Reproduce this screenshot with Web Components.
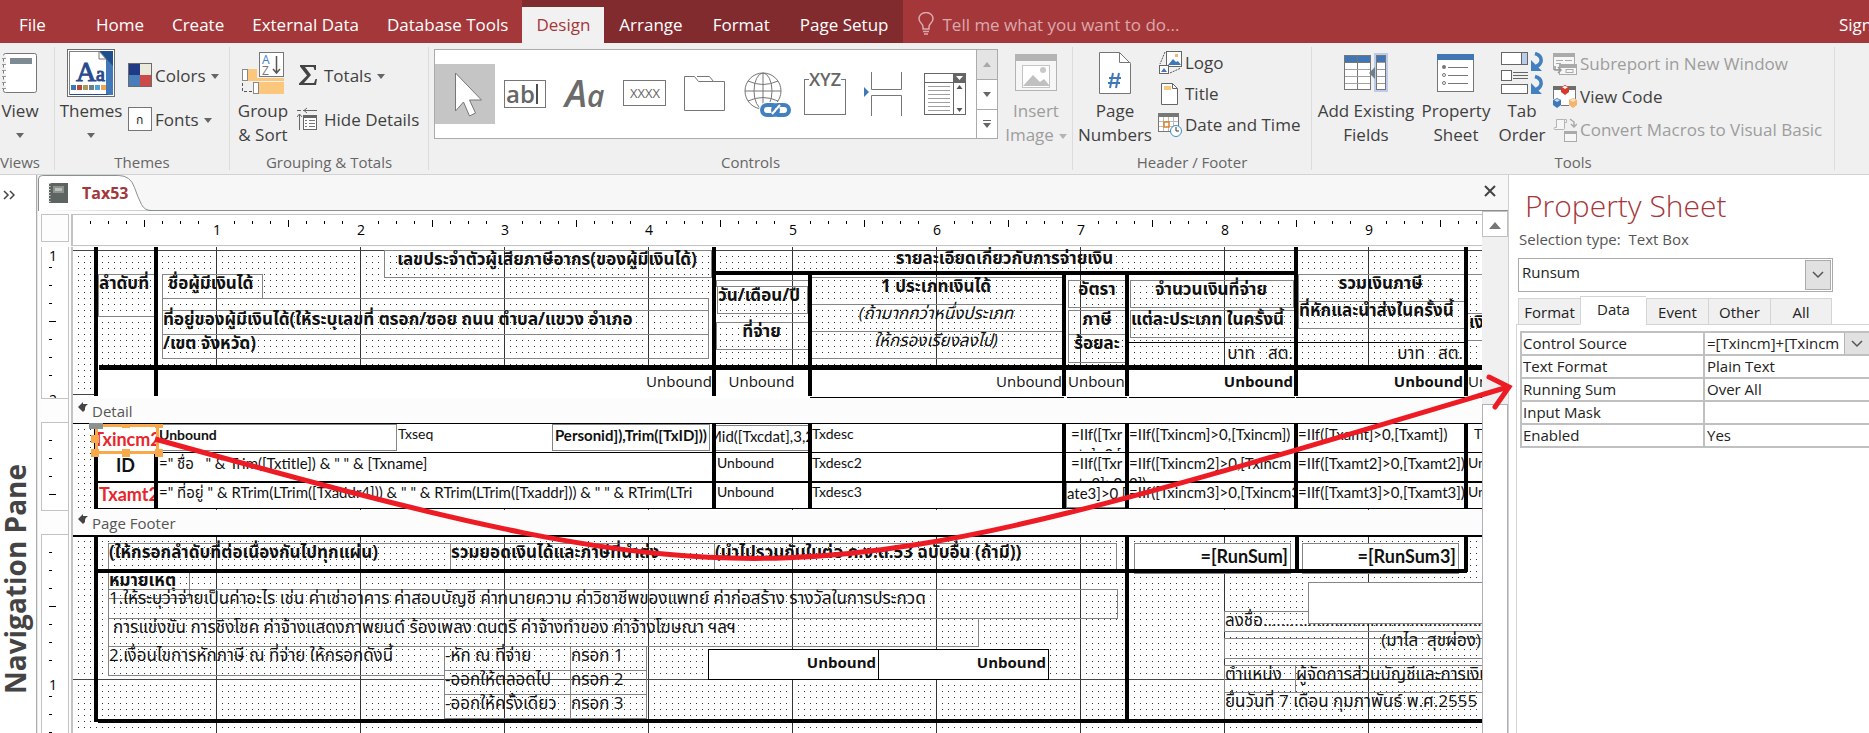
<!DOCTYPE html>
<html lang="en">
<head>
<meta charset="utf-8">
<title>Tax53 - Access</title>
<style>
  html, body { height: 100%; margin: 0; }
  body {
    overflow: hidden;
    background: #fff;
    font-family: "Open Sans", "Noto Sans Thai", "Noto Sans", sans-serif;
    font-size: 17px;
    color: #3f3f3f;
  }
</style>
</head>
<body>
<access-app>
  <tab-strip slot="tabs"></tab-strip>

  <ribbon-bar slot="ribbon">
    <ribbon-group label="Views" style="width:55px; --shift:-14px">
      <ribbon-button big icon="view" caret="below" style="width:68px">View</ribbon-button>
    </ribbon-group>
    <ribbon-group label="Themes" style="width:175px">
      <ribbon-button big icon="themes" caret="below" style="width:72px">Themes</ribbon-button>
      <ribbon-stack style="--row:44px; --top:6px">
        <ribbon-button icon="colors" caret="after">Colors</ribbon-button>
        <ribbon-button icon="fonts" caret="after">Fonts</ribbon-button>
      </ribbon-stack>
    </ribbon-group>
    <ribbon-group label="Grouping &amp; Totals" style="width:199px">
      <ribbon-button big icon="groupsort" style="width:66px">Group<br>&amp; Sort</ribbon-button>
      <ribbon-stack style="--row:44px; --top:6px">
        <ribbon-button icon="sigma" caret="after">Totals</ribbon-button>
        <ribbon-button icon="details">Hide Details</ribbon-button>
      </ribbon-stack>
    </ribbon-group>
    <ribbon-group label="Controls" style="width:644px">
      <control-gallery></control-gallery>
      <ribbon-button big disabled icon="image" caret="after" style="width:74px">Insert<br>Image</ribbon-button>
    </ribbon-group>
    <ribbon-group label="Header / Footer" style="width:239px">
      <ribbon-button big icon="pagenum" style="width:84px">Page<br>Numbers</ribbon-button>
      <ribbon-stack style="--row:31px">
        <ribbon-button icon="logo">Logo</ribbon-button>
        <ribbon-button icon="title">Title</ribbon-button>
        <ribbon-button icon="datetime">Date and Time</ribbon-button>
      </ribbon-stack>
    </ribbon-group>
    <ribbon-group label="Tools" style="width:523px">
      <ribbon-button big icon="fields" style="width:108px">Add Existing<br>Fields</ribbon-button>
      <ribbon-button big icon="propsheet" style="width:72px">Property<br>Sheet</ribbon-button>
      <ribbon-button big icon="taborder" style="width:60px">Tab<br>Order</ribbon-button>
      <ribbon-stack style="--row:33px">
        <ribbon-button disabled icon="subreport">Subreport in New Window</ribbon-button>
        <ribbon-button icon="code">View Code</ribbon-button>
        <ribbon-button disabled icon="macros">Convert Macros to Visual Basic</ribbon-button>
      </ribbon-stack>
    </ribbon-group>
  </ribbon-bar>

  <nav-pane>Navigation Pane</nav-pane>

  <report-document name="Tax53">
    <report-section height="151" origin="3" first="1">
      <report-line x="0" y="3" width="1410" height="1" thin></report-line>
      <report-line x="0" y="147" width="22" height="1" thin></report-line>
      <report-item x="25" y="27" width="57" height="43" class="box bold">ลำดับที่</report-item>
      <report-item x="89" y="27" width="101" height="25" class="box bold" style="--pad:5px">ชื่อผู้มีเงินได้</report-item>
      <report-item x="89" y="51" width="547" height="13" class="box"></report-item>
      <report-item x="89" y="63" width="547" height="25" class="box bold">ที่อยู่ของผู้มีเงินได้(ให้ระบุเลขที่ ตรอก/ซอย ถนน ตำบล/แขวง อำเภอ</report-item>
      <report-item x="89" y="87" width="547" height="25" class="box bold">/เขต จังหวัด)</report-item>
      <report-item x="311" y="3" width="328" height="28" class="box bold center">เลขประจำตัวผู้เสียภาษีอากร(ของผู้มีเงินได้)</report-item>
      <report-item x="643" y="3" width="578" height="22" class="bold center">รายละเอียดเกี่ยวกับการจ่ายเงิน</report-item>
      <report-item x="643" y="33" width="93" height="7" class="box"></report-item>
      <report-item x="644" y="39" width="91" height="28" class="box bold">วัน/เดือน/ปี</report-item>
      <report-item x="643" y="75" width="93" height="28" class="box bold center">ที่จ่าย</report-item>
      <report-item x="737" y="30" width="254" height="28" class="box bold center">1 ประเภทเงินได้</report-item>
      <report-item x="737" y="57" width="254" height="28" class="box italic center">(ถ้ามากกว่าหนึ่งประเภท</report-item>
      <report-item x="737" y="84" width="254" height="28" class="box italic center">ให้กรองเรียงลงไป)</report-item>
      <report-item x="995" y="33" width="60" height="28" class="box bold center">อัตรา</report-item>
      <report-item x="995" y="63" width="60" height="25" class="box bold center">ภาษี</report-item>
      <report-item x="995" y="87" width="60" height="29" class="box bold center">ร้อยละ</report-item>
      <report-item x="1057" y="33" width="164" height="28" class="box bold center">จำนวนเงินที่จ่าย</report-item>
      <report-item x="1057" y="63" width="165" height="28" class="box bold">แต่ละประเภท ในครั้งนี้</report-item>
      <report-line x="1056" y="95" width="335" height="1"></report-line>
      <report-item x="1056" y="98" width="166" height="20" class="end">บาท&nbsp;&nbsp; สต.</report-item>
      <report-item x="1225" y="27" width="167" height="28" class="box bold center">รวมเงินภาษี</report-item>
      <report-item x="1225" y="54" width="167" height="28" class="box bold">ที่หักและนำส่งในครั้งนี้</report-item>
      <report-item x="1225" y="98" width="167" height="20" class="end">บาท&nbsp;&nbsp; สต.</report-item>
      <report-item x="1394" y="27" width="60" height="40" class="box"></report-item>
      <report-item x="1394" y="66" width="60" height="28" class="box bold" style="--pad:1px">เงิ</report-item>
      <report-item x="25" y="122" width="616" height="29" class="fill end text">Unbound</report-item>
      <report-item x="643" y="122" width="92" height="29" class="fill center text">Unbound</report-item>
      <report-item x="737" y="122" width="254" height="29" class="fill end text foot">Unbound</report-item>
      <report-item x="994" y="122" width="60" height="29" class="fill text foot">Unbound</report-item>
      <report-item x="1056" y="122" width="166" height="29" class="fill end text foot bold">Unbound</report-item>
      <report-item x="1223" y="122" width="169" height="29" class="fill end text foot bold">Unbound</report-item>
      <report-item x="1394" y="122" width="80" height="29" class="fill text foot">Unbound</report-item>
      <report-line x="26" y="118" width="1400" height="5"></report-line>
      <report-line x="643" y="24" width="582" height="4"></report-line>
      <report-line x="21" y="0" width="4" height="149"></report-line>
      <report-line x="81" y="0" width="4" height="149"></report-line>
      <report-line x="639" y="0" width="4" height="149"></report-line>
      <report-line x="735" y="28" width="4" height="121"></report-line>
      <report-line x="989" y="28" width="4" height="121"></report-line>
      <report-line x="1052" y="28" width="4" height="121"></report-line>
      <report-line x="1221" y="0" width="4" height="149"></report-line>
      <report-line x="1391" y="0" width="4" height="149"></report-line>
    </report-section>

    <section-bar>Detail</section-bar>

    <report-section height="87" origin="0">
      <report-item x="22" y="1" width="1460" height="85" class="fill"></report-item>
      <report-item x="85" y="1" width="239" height="27" class="box code bold">Unbound</report-item>
      <report-item x="324" y="1" width="155" height="27" class="code">Txseq</report-item>
      <report-item x="479" y="1" width="158" height="27" class="box expr bold end">Personid]),Trim([TxID]))</report-item>
      <report-item x="642" y="2" width="94" height="26" class="box expr center">Mid([Txcdat],3,2</report-item>
      <report-item x="738" y="1" width="250" height="27" class="code">Txdesc</report-item>
      <report-item x="997" y="1" width="54" height="27" class="expr">=IIf([Txr<br>ate]&gt;0,[</report-item>
      <report-item x="1055" y="1" width="166" height="27" class="expr">=IIf([Txincm]&gt;0,[Txincm])</report-item>
      <report-item x="1224" y="1" width="166" height="27" class="expr">=IIf([Txamt]&gt;0,[Txamt])</report-item>
      <report-item x="1400" y="1" width="66" height="27" class="code">T</report-item>

      <report-item x="25" y="30" width="56" height="28" class="name center">ID</report-item>
      <report-item x="85" y="30" width="554" height="28" class="expr">=" ชื่อ&nbsp;&nbsp; " &amp; Trim([Txtitle]) &amp; " " &amp; [Txname]</report-item>
      <report-item x="643" y="30" width="92" height="28" class="code">Unbound</report-item>
      <report-item x="738" y="30" width="250" height="28" class="code">Txdesc2</report-item>
      <report-item x="997" y="30" width="54" height="28" class="expr">=IIf([Txr<br>ate2]&gt;0,</report-item>
      <report-item x="1055" y="30" width="166" height="28" class="expr">=IIf([Txincm2]&gt;0,[Txincm<br>2])</report-item>
      <report-item x="1224" y="30" width="168" height="28" class="expr">=IIf([Txamt2]&gt;0,[Txamt2])</report-item>
      <report-item x="1394" y="30" width="66" height="28" class="code">Unbound</report-item>

      <report-item x="25" y="59" width="56" height="26" class="name red">Txamt2</report-item>
      <report-item x="85" y="59" width="554" height="26" class="expr">=" ที่อยู่ " &amp; RTrim(LTrim([Txaddr4])) &amp; " " &amp; RTrim(LTrim([Txaddr])) &amp; " " &amp; RTrim(LTri</report-item>
      <report-item x="643" y="59" width="92" height="26" class="code">Unbound</report-item>
      <report-item x="738" y="59" width="250" height="26" class="code">Txdesc3</report-item>
      <report-item x="993" y="59" width="60" height="26" class="box expr">ate3]&gt;0,[T</report-item>
      <report-item x="1055" y="59" width="166" height="26" class="expr">=IIf([Txincm3]&gt;0,[Txincm3</report-item>
      <report-item x="1224" y="59" width="168" height="26" class="expr">=IIf([Txamt3]&gt;0,[Txamt3])</report-item>
      <report-item x="1394" y="59" width="66" height="26" class="code">Unbound</report-item>

      <report-line x="0" y="0" width="1426" height="1"></report-line>
      <report-line x="85" y="29" width="1341" height="1"></report-line>
      <report-line x="22" y="58" width="1404" height="2"></report-line>
      <report-line x="22" y="85" width="1404" height="1"></report-line>
      <report-line x="21" y="1" width="4" height="85"></report-line>
      <report-line x="81" y="1" width="4" height="85"></report-line>
      <report-line x="639" y="1" width="4" height="85"></report-line>
      <report-line x="735" y="1" width="4" height="85"></report-line>
      <report-line x="989" y="1" width="4" height="85"></report-line>
      <report-line x="1052" y="1" width="4" height="85"></report-line>
      <report-line x="1221" y="1" width="4" height="85"></report-line>
      <report-line x="1391" y="1" width="4" height="85"></report-line>
      <selected-item x="22" y="1" width="64" height="30">Txincm2</selected-item>
    </report-section>

    <section-bar>Page Footer</section-bar>

    <report-section grow origin="0">
      <report-line x="0" y="144" width="1410" height="1" thin></report-line>
      <report-item x="35" y="8" width="343" height="30" class="box bold">(ให้กรอกลำดับที่ต่อเนื่องกันไปทุกแผ่น)</report-item>
      <report-item x="377" y="8" width="265" height="30" class="box bold">รวมยอดเงินได้และภาษีที่นำส่ง</report-item>
      <report-item x="641" y="8" width="403" height="30" class="box bold">(นำไปรวมกับใบต่อ ภ.ง.ด.53 ฉบับอื่น (ถ้ามี))</report-item>
      <report-item x="1061" y="8" width="157" height="31" class="box fill name end">=[RunSum]</report-item>
      <report-item x="1229" y="8" width="157" height="31" class="box fill name end">=[RunSum3]</report-item>
      <report-item x="35" y="36" width="82" height="28" class="box bold">หมายเหตุ</report-item>
      <report-item x="35" y="54" width="1010" height="30" class="box">1.ให้ระบุว่าจ่ายเป็นค่าอะไร เช่น ค่าเช่าอาคาร ค่าสอบบัญชี ค่าทนายความ ค่าวิชาชีพของแพทย์ ค่าก่อสร้าง รางวัลในการประกวด</report-item>
      <report-item x="35" y="83" width="871" height="29" class="box" style="--pad:4px">การแข่งขัน การชิงโชค ค่าจ้างแสดงภาพยนต์ ร้องเพลง ดนตรี ค่าจ้างทำของ ค่าจ้างโฆษณา ฯลฯ</report-item>
      <report-item x="35" y="111" width="337" height="30" class="box">2.เงื่อนไขการหักภาษี ณ ที่จ่าย ให้กรอกดังนี้</report-item>
      <report-item x="371" y="111" width="127" height="25" class="box">-หัก ณ ที่จ่าย</report-item>
      <report-item x="497" y="111" width="77" height="25" class="box">กรอก 1</report-item>
      <report-item x="371" y="135" width="127" height="25" class="box">-ออกให้ตลอดไป</report-item>
      <report-item x="497" y="135" width="77" height="25" class="box">กรอก 2</report-item>
      <report-item x="371" y="159" width="127" height="25" class="box">-ออกให้ครั้งเดียว</report-item>
      <report-item x="497" y="159" width="77" height="25" class="box">กรอก 3</report-item>
      <report-item x="635" y="114" width="171" height="31" class="box black fill bold end text">Unbound</report-item>
      <report-item x="805" y="114" width="171" height="31" class="box black fill bold end text">Unbound</report-item>
      <report-item x="1151" y="76" width="360" height="21" class="box">ลงชื่อ.............................................................................................</report-item>
      <report-item x="1235" y="47" width="260" height="42" class="box fill"></report-item>
      <report-item x="1151" y="103" width="360" height="21" class="box"></report-item>
      <report-item x="1151" y="97" width="259" height="22" class="end">(มาไล&nbsp; สุขผ่อง)</report-item>
      <report-item x="1151" y="130" width="72" height="28" class="box">ตำแหน่ง</report-item>
      <report-item x="1222" y="130" width="300" height="28" class="box">ผู้จัดการส่วนบัญชีและการเงิน</report-item>
      <report-item x="1151" y="157" width="360" height="28" class="box">ยื่นวันที่ 7 เดือน กุมภาพันธ์ พ.ศ.2555</report-item>
      <report-line x="0" y="0" width="1426" height="2"></report-line>
      <report-line x="21" y="34" width="1373" height="4"></report-line>
      <report-line x="25" y="184" width="1400" height="4"></report-line>
      <report-line x="21" y="1" width="4" height="186"></report-line>
      <report-line x="1052" y="1" width="4" height="184"></report-line>
      <report-line x="1222" y="1" width="4" height="34"></report-line>
      <report-line x="1391" y="1" width="4" height="36"></report-line>
    </report-section>
  </report-document>

  <property-sheet></property-sheet>
  <pen-mark slot="overlay"></pen-mark>
</access-app>

<script>
const define = (name, html, setup) => {
  const template = document.createElement('template')
  template.innerHTML = html

  customElements.define(name, class extends HTMLElement {
    constructor() {
      super()
      this.attachShadow({ mode: 'open' }).appendChild(template.content.cloneNode(true))
    }

    connectedCallback() {
      if (setup) setup(this, this.shadowRoot)
    }
  })
}

/* icons */

const cube = (x, y, a, b) => `<path d="M${x} ${y + 2}l4-2 4 2v5l-4 3-4-3z" fill="${a}"/><path d="M${x + 1} ${y + 2}l3-1 3 1-3 2z" fill="${b}"/>`

const icons = {
  view: [36, 42, `
    <rect x="1.500" y="1.500" width="33" height="39" rx="2" fill="#fff" stroke="#767676"/>
    <rect x="8" y="6" width="22" height="6" fill="#7d8a91"/>
    <g stroke="#f0f0f0" stroke-width="3"><path d="M0 5h4M0 11h4M0 17h4M0 23h4M0 29h4M0 35h4"/></g>
    <g stroke="#999"><path d="M0 6.500h4M0 12.500h4M0 18.500h4M0 24.500h4M0 30.500h4M0 36.500h4"/></g>`],
  themes: [48, 48, `
    <rect x=".5" y=".5" width="47" height="47" fill="#fff" stroke="#6d6d6d"/>
    <rect x="2.500" y="2.500" width="43" height="43" fill="#fff" stroke="#808080"/>
    <path d="M32 2h14v44h-7V9z" fill="#4277b8"/><path d="M32 2h14v15z" fill="#1f4e8c"/><path d="M32 2l7 8h-7z" fill="#fff" stroke="#777"/>
    <text x="9" y="32" font-family="Liberation Serif" font-size="28" fill="#264b8f" stroke="#264b8f">A</text>
    <text x="29" y="32" font-family="Liberation Serif" font-size="20" fill="#264b8f" stroke="#264b8f">a</text>
    <rect x="4" y="36" width="5" height="5" fill="#3b78b5"/><rect x="10" y="36" width="5" height="5" fill="#b5483c"/>
    <rect x="16" y="36" width="5" height="5" fill="#a9995f"/><rect x="22" y="36" width="5" height="5" fill="#6a7f86"/>
    <rect x="28" y="36" width="5" height="5" fill="#4aa3dd"/><rect x="34" y="36" width="5" height="5" fill="#f2a44c"/>
    <path d="M3 45.500h38" stroke="#264b8f"/>`],
  colors: [24, 24, `
    <rect width="12" height="12" fill="#1f3b85"/><rect x="12" width="12" height="12" fill="#eceadb"/>
    <rect y="12" width="12" height="12" fill="#4a7ebb"/><rect x="12" y="12" width="12" height="12" fill="#cc4b48"/>
    <rect x=".5" y=".5" width="23" height="23" fill="none" stroke="#6b6b6b"/>`],
  fonts: [24, 24, `
    <rect x=".5" y=".5" width="23" height="23" fill="#fff" stroke="#767676"/>
    <text x="8" y="17" font-size="12" font-family="Open Sans" fill="#111">ก</text>`],
  groupsort: [42, 42, `
    <rect x="5" y="17" width="37" height="12" fill="#fbc77d"/><rect x="16" y="30" width="26" height="12" fill="#fbc77d"/>
    <rect x=".5" y="17.500" width="5" height="11" fill="#fff" stroke="#8a8a8a"/><rect x="11.500" y="30.500" width="5" height="11" fill="#fff" stroke="#8a8a8a"/>
    <path d="M.5 31v8.500h10" fill="none" stroke="#555" stroke-dasharray="3 2"/>
    <rect x="15" y="0" width="27" height="26" fill="#f0f0f0"/>
    <rect x="17.500" y=".5" width="24" height="24" fill="#fff" stroke="#767676"/>
    <text x="20" y="12" font-size="12" fill="#3f7fc1">A</text><text x="20" y="23" font-size="12" fill="#767676">Z</text>
    <path d="M34.500 4v17M31 17l3.500 4 3.500-4" fill="none" stroke="#555" stroke-width="1.500"/>`],
  sigma: [24, 24, `<path d="M3 2h16v5h-1.500l-1-3H8l6 8-7 8h10l1.500-4H20l-1 6H2v-1.500L10 12.500 3 3.500z" fill="#444"/>`],
  details: [24, 24, `
    <path d="M0 3.500h4M6 3.500h14M10 1L7 3.500 10 6M2.500 7v16M0 10l2.500-3L5 10" fill="none" stroke="#666"/>
    <rect x="6.500" y="8.500" width="13" height="14" fill="#fff" stroke="#666"/><path d="M6 8h14v3H6z" fill="#666"/>
    <path d="M8 13.500h2M12 13.500h6M8 16.500h2M12 16.500h6M8 19.500h2M12 19.500h6" stroke="#777"/>`],
  image: [42, 38, `
    <rect x=".5" y=".5" width="41" height="36" fill="#f6f6f6" stroke="#b4b4b4"/><rect width="42" height="7" fill="#b4b4b4"/>
    <rect x="7.500" y="11.500" width="27" height="22" fill="#fff" stroke="#c4c4c4"/>
    <path d="M8 32l10-11 7 7 4-3 6 7z" fill="#c0c0c0"/><circle cx="28" cy="16" r="3" fill="#c8c8c8"/>`],
  pagenum: [32, 42, `
    <path d="M.5.500h20l11 11v30H.5z" fill="#fff" stroke="#767676"/><path d="M20.500.500v10h11" fill="none" stroke="#767676"/>
    <path d="M14 21l-3 15M20 21l-3 15M10 26h12M9 31h12" stroke="#3e78b8" stroke-width="2"/>`],
  logo: [24, 24, `
    <rect x="8.500" y=".5" width="15" height="15" fill="#fff" stroke="#666"/><rect x="1.500" y="14.500" width="9" height="8" fill="#fff" stroke="#666"/>
    <path d="M10 14l5-6 3 3 2-1 3 4z" fill="#3e78b8"/><rect x="17" y="3" width="3" height="3" fill="#f5b46c"/><path d="M3 21l3-4 3 4z" fill="#3e78b8"/>
    <path d="M7 1L2 13M12 22l11-5" stroke="#555" stroke-dasharray="2 1"/>`],
  title: [24, 24, `
    <path d="M3.500 1.500h11l5 5v16h-16z" fill="#fff" stroke="#666"/><path d="M14.500 1.500v5h5" fill="none" stroke="#666"/>
    <rect x="6" y="4" width="7" height="4" fill="#fbc77d"/>`],
  datetime: [24, 24, `
    <rect x=".5" y=".5" width="20" height="18" fill="#fff" stroke="#777"/><rect width="21" height="4" fill="#777"/>
    <path d="M5.500 4v14M10.500 4v14M15.500 4v14M1 8.500h19M1 13.500h19" stroke="#bbb"/><rect x="6" y="9" width="5" height="5" fill="#fff" stroke="#d9822b" stroke-width="1.500"/>
    <circle cx="18" cy="18" r="5.500" fill="#fff" stroke="#3e8ec4"/><path d="M18 14v4h3" fill="none" stroke="#333"/>`],
  fields: [44, 40, `
    <rect x=".5" y="2.500" width="26" height="34" fill="#fff" stroke="#767676"/><rect x="1" y="3" width="25" height="6" fill="#4076b4"/>
    <path d="M13.500 3v34M1 9.500h26" stroke="#767676"/><path d="M1 16.500h25M1 23.500h25M1 30.500h25" stroke="#a2a2a2"/>
    <rect x="30" y="0" width="14" height="39" fill="#bccbe8"/><rect x="32.500" y="2.500" width="9" height="34" fill="#fff" stroke="#767676"/><rect x="33" y="3" width="8" height="6" fill="#4076b4"/>
    <path d="M33 9.500h8M33 16.500h8M33 23.500h8M33 30.500h8" stroke="#999"/><path d="M31 14v12l-6-6z" fill="#6f8088"/>`],
  propsheet: [38, 38, `
    <rect x=".5" y=".5" width="36" height="37" fill="#fff" stroke="#767676"/><rect width="37" height="6" fill="#4076b4"/>
    <circle cx="7" cy="13" r="2" fill="#777"/><circle cx="7" cy="21" r="1.500" fill="#fff" stroke="#777"/><circle cx="7" cy="29" r="1.500" fill="#fff" stroke="#777"/>
    <path d="M11 13.500h20M11 21.500h20M11 29.500h20" stroke="#777"/>`],
  taborder: [42, 42, `
    <rect x=".5" y=".5" width="26" height="12" fill="#fff" stroke="#666"/><rect x="20" y="1" width="6" height="11" fill="#bccbe8"/><path d="M20.500 1v11" stroke="#666"/>
    <rect x=".5" y="18.500" width="10" height="10" fill="#fff" stroke="#666"/><path d="M12 20.500h15M12 23.500h15M12 26.500h15" stroke="#666"/>
    <rect x=".5" y="32.500" width="26" height="9" fill="#fff" stroke="#666"/>
    <path d="M34 1.500q7 2 6 8-1 4-5 5M34 24.500q7 2 6 8-1 4-5 5" fill="none" stroke="#4280bf" stroke-width="3.500"/>
    <path d="M30 8v11h11zM30 31v11h11z" fill="#4280bf"/>`],
  subreport: [24, 24, `
    <rect x=".5" y="1.500" width="21" height="16" fill="#f6f6f6" stroke="#aaa"/><rect y="1" width="22" height="4" fill="#aaa"/>
    <path d="M3 8.500h7M12 8.500h7M3 11.500h5" stroke="#aaa"/><rect x="6.500" y="12.500" width="17" height="10" fill="#f6f6f6" stroke="#aaa"/><rect x="6" y="12" width="18" height="4" fill="#aaa"/>
    <rect x="13" y="17.500" width="7" height="3" fill="none" stroke="#aaa"/><path d="M2 14v4h6M5 15l3 3-3 3" fill="none" stroke="#999" stroke-width="1.500"/>`],
  code: [24, 24, `
    <rect x=".5" y="1.500" width="22" height="19" fill="#fff" stroke="#777"/><rect y="1" width="23" height="4" fill="#6d6d6d"/>
    <path d="M0 14h8v8H0zM16 14h8v8h-8z" fill="#f0f0f0"/>
    ${cube(8, 0, '#d73a2a', '#fff')}${cube(0, 13, '#3e78b8', '#cfe0f2')}${cube(16, 13, '#f6b36b', '#fde8cc')}`],
  macros: [24, 24, `
    <path d="M3.500 1.500h8v9q0 1-1 1h-9q-1-1 0-2h2zM11.500 1.500h2v3h-2" fill="#f6f6f6" stroke="#b4b4b4"/>
    <path d="M17 1l4 3v4M18 6l3 3 3-3" fill="none" stroke="#aaa" stroke-width="1.500"/>
    <rect x="11.500" y="13.500" width="12" height="10" fill="#f6f6f6" stroke="#aaa"/><rect x="11" y="13" width="13" height="3" fill="#aaa"/>`],

  pointer: [60, 60, `<path d="M20.500 9v38l8-9 6 14 6-3-6-13h12z" fill="#fff" stroke="#777"/>`],
  textbox: [60, 60, `
    <rect x="9.500" y="16.500" width="41" height="27" fill="#fff" stroke="#767676"/>
    <text x="11" y="39" font-size="24" font-weight="600" fill="#666">ab</text><path d="M42 20v20" stroke="#111" stroke-width="1.500"/>`],
  label: [60, 60, `
    <text x="10" y="43" font-size="37" font-style="italic" font-weight="600" fill="#6b6b6b">A</text>
    <text x="32" y="43" font-size="30" font-style="italic" font-weight="600" fill="#6b6b6b">a</text>`],
  button: [60, 60, `
    <rect x="8.500" y="16.500" width="42" height="25" fill="#fff" stroke="#767676"/>
    <text x="30" y="34" text-anchor="middle" font-size="13" fill="#666">XXXX</text>`],
  tabctl: [60, 60, `<path d="M9.500 12.500h10l4 5h15l-4-5H22M38.500 17.500h11v29h-40v-34" fill="none" stroke="#767676"/>`],
  link: [60, 60, `
    <g fill="none" stroke="#767676"><circle cx="28" cy="27" r="18"/><ellipse cx="28" cy="27" rx="9" ry="18"/><path d="M28 9v36M10 27h36M13 17q15 7 30 0M13 37q15-7 30 0"/></g>
    <rect x="24" y="38" width="32" height="17" rx="8" fill="#fff"/>
    <g fill="none" stroke="#4280bf" stroke-width="4"><rect x="27" y="41" width="16" height="10" rx="5"/><rect x="38" y="41" width="16" height="10" rx="5"/></g>
    <path d="M37 50l8-9" stroke="#fff" stroke-width="2"/>`],
  optgroup: [60, 60, `
    <rect x="9.500" y="15.500" width="41" height="35" fill="#fff" stroke="#767676"/><rect x="14" y="9" width="32" height="12" fill="#fff"/>
    <text x="30" y="22" text-anchor="middle" font-size="18" font-weight="600" fill="#666">XYZ</text>`],
  pagebreak: [60, 60, `
    <path d="M16.500 8v17.500h30V8M16.500 52V31.500h30V52" fill="none" stroke="#767676"/><path d="M9 23v10l5-5z" fill="#3e78b8"/>`],
  combo: [60, 60, `
    <rect x="9.500" y="9.500" width="41" height="41" fill="#fff" stroke="#666"/><path d="M9 18.500h42M38.500 9v42" stroke="#666"/>
    <rect x="39" y="10" width="11" height="8" fill="#666"/><path d="M41 12h7l-3.500 4z" fill="#fff"/>
    <path d="M13 22.500h22M13 26.500h22M13 30.500h22M13 34.500h22M13 38.500h22M13 42.500h22M13 46.500h22" stroke="#a0a0a0"/>
    <path d="M41.500 25h6l-3-4zM41.500 44h6l-3 4z" fill="#555"/>`],
  bulb: [16, 24, `<path d="M5 17v-2q0-2-2-4-2-2-2-4.500a7 6 0 0 1 14 0q0 2.500-2 4.500-2 2-2 4v2zM5 19.500h6M6 22h4" fill="none" stroke="#dca9aa" stroke-width="1.500"/>`],
  report: [20, 20, `
    <rect x="1" width="19" height="20" fill="#5e6461"/><rect x="5" y="3" width="11" height="7" fill="#8d938f"/><path d="M7 5h7v3H7z" fill="#b9bfba"/>
    <path d="M1.500 0v20" stroke="#d8d8d8" stroke-width="2" stroke-dasharray="1 2"/>`]
}

define('app-icon', `
  <style>
    :host { display: inline-flex; flex: none; }
    svg { display: block; font-family: "Open Sans", sans-serif; }
  </style>
`, (host, root) => {
  const [w, h, body] = icons[host.getAttribute('name')]
  const box = document.createElement('div')
  box.innerHTML = `<svg width="${w}" height="${h}" viewBox="0 0 ${w} ${h}" aria-hidden="true">${body}</svg>`
  root.appendChild(box)
})

/* frame */

define('access-app', `
  <style>
    :host { display: flex; flex-direction: column; height: 100vh; overflow: hidden; }
    main { flex: 1; min-height: 0; display: flex; position: relative; }
  </style>
  <slot name="tabs"></slot>
  <slot name="ribbon"></slot>
  <main><slot></slot><slot name="overlay"></slot></main>
`)

define('tab-strip', `
  <style>
    :host { display: flex; height: 43px; background: #a4373a; color: #fff; overflow: hidden; flex: none; }
    nav, .context { display: flex; align-items: stretch; padding-top: 7px; }
    .context { background: #822b2f; }
    button {
      border: 0; background: none; color: inherit; font: inherit;
      height: 36px; padding: 0 14px 2px; white-space: nowrap;
    }
    .file { padding-left: 19px; margin-right: 22px; }
    .context button { padding: 0 15px 2px; }
    .context .active { background: #f1f1f1; color: #a4373a; padding: 0 14px 2px; }
    .tell { display: flex; align-items: center; gap: 8px; flex: 1; padding: 7px 0 2px 15px; color: #dca9aa; }
    input { flex: 1; border: 0; outline: 0; padding: 0; background: none; font: inherit; color: inherit; }
    input::placeholder { color: #dca9aa; opacity: 1; }
    .sign { width: 30px; overflow: hidden; padding: 7px 0 0; flex: none; }
    .sign button { padding: 0 0 2px; }
  </style>
  <nav>
    <button class="file">File</button><button>Home</button><button>Create</button><button>External Data</button><button>Database Tools</button>
  </nav>
  <div class="context">
    <button class="active">Design</button><button>Arrange</button><button>Format</button><button>Page Setup</button>
  </div>
  <label class="tell"><app-icon name="bulb"></app-icon><input type="text" placeholder="Tell me what you want to do..." aria-label="Tell me what you want to do"></label>
  <div class="sign"><button>Sign in</button></div>
`)

define('ribbon-bar', `
  <style>
    :host { display: flex; flex: none; height: 127px; padding: 4px 0 0; background: #f0f0f0; border-bottom: 1px solid #d2d2d2; overflow: hidden; }
  </style>
  <slot></slot>
`)

define('ribbon-group', `
  <style>
    :host { box-sizing: border-box; display: flex; flex-direction: column; flex: none; height: 123px; padding-bottom: 1px; border-right: 1px solid #dcdcdc; }
    .items { display: flex; flex: 1; align-items: flex-start; margin-left: var(--shift, 0); }
    .label { height: 17px; margin-left: var(--shift, 0); font-size: 15px; line-height: 20px; text-align: center; color: #666; white-space: nowrap; }
  </style>
  <div class="items"><slot></slot></div>
  <div class="label"></div>
`, (host, root) => {
  root.querySelector('.label').textContent = host.getAttribute('label')
})

define('ribbon-stack', `
  <style>
    :host { display: flex; flex-direction: column; padding-top: var(--top, 0); }
  </style>
  <slot></slot>
`)

define('ribbon-button', `
  <style>
    :host { display: block; flex: none; }
    button {
      display: flex; align-items: center; gap: 3px; height: var(--row, 31px);
      border: 0; background: none; padding: 0 0 0 1px; font: inherit; color: #3f3f3f; white-space: nowrap;
    }
    :host([big]) button { flex-direction: column; gap: 0; padding: 2px 0 0; height: auto; width: 100%; line-height: 24px; }
    .icon { display: flex; align-items: center; justify-content: center; min-width: 24px; }
    :host([big]) .icon { height: 48px; padding-bottom: 2px; }
    :host([disabled]) button { color: #9d9d9d; }
    .caret { display: none; border: 4px solid transparent; border-top: 5px solid #666; border-bottom: 0; width: 0; }
    :host([caret="after"]) .caret { display: inline-block; margin-left: 5px; vertical-align: middle; }
    :host([caret="below"]) .caret { display: block; margin: 10px auto 0; }
    :host([disabled]) .caret { border-top-color: #b4b4b4; }
  </style>
  <button><span class="icon"></span><span><slot></slot><span class="caret"></span></span></button>
`, (host, root) => {
  root.querySelector('.icon').innerHTML = `<app-icon name="${host.getAttribute('icon')}"></app-icon>`
  root.querySelector('button').disabled = host.hasAttribute('disabled')
})

define('control-gallery', `
  <style>
    :host { display: flex; box-sizing: border-box; width: 564px; height: 90px; margin: 2px 1px 0 5px; border: 1px solid #ababab; background: #fff; flex: none; }
    .items { flex: 1; display: flex; align-items: center; }
    .items button { border: 0; padding: 0; width: 60px; height: 60px; background: none; }
    .items button.on { background: #c5c5c5; }
    .more { width: 21px; display: grid; grid-template-rows: 1fr 1fr 1fr; }
    .more button { border: 0; border-left: 1px solid #ababab; background: #fff; padding: 0; display: flex; align-items: center; justify-content: center; }
    .more button + button { border-top: 1px solid #ababab; }
    .more .off { background: #e4e4e4; }
  </style>
  <div class="items"></div>
  <div class="more">
    <button class="off" aria-label="Previous row"><svg width="8" height="5"><path d="M0 5h8L4 0z" fill="#a8a8a8"/></svg></button>
    <button aria-label="Next row"><svg width="8" height="5"><path d="M0 0h8L4 5z" fill="#666"/></svg></button>
    <button aria-label="More"><svg width="8" height="8"><path d="M0 0h8v1H0zM0 3h8L4 8z" fill="#666"/></svg></button>
  </div>
`, (host, root) => {
  const names = ['pointer', 'textbox', 'label', 'button', 'tabctl', 'link', 'optgroup', 'pagebreak', 'combo']
  root.querySelector('.items').innerHTML = names
    .map((name, i) => `<button class="${i === 0 ? 'on' : ''}" aria-label="${name}"><app-icon name="${name}"></app-icon></button>`)
    .join('')
})

define('nav-pane', `
  <style>
    :host { display: flex; flex-direction: column; align-items: center; justify-content: space-between; box-sizing: border-box; width: 37px; flex: none; background: #fff; border-right: 1px solid #a8adad; padding: 14px 6px 39px 0; }
    button { border: 0; background: none; padding: 0; height: 12px; margin-right: 12px; }
    svg { display: block; }
    .title { writing-mode: vertical-rl; transform: rotate(180deg); font-size: 28px; line-height: 30px; font-weight: 700; color: #444; white-space: nowrap; }
  </style>
  <button aria-label="Open navigation pane"><svg width="12" height="12"><path d="M1 2l4 4-4 4M7 2l4 4-4 4" fill="none" stroke="#444" stroke-width="1.500"/></svg></button>
  <div class="title"><slot></slot></div>
`)

/* report designer */

const ticks = (count, origin, first, vertical) => {
  let out = ''
  for (let i = 0; i <= count; i++) {
    const at = origin + i * 18
    if (i % 8 === 0) {
      const n = first + i / 8
      if (n === 0) continue
      out += vertical
        ? `<text x="7" y="${at + 11}">${n}</text>`
        : `<text x="${at}" y="20" text-anchor="middle">${n}</text>`
    } else {
      const size = i % 4 === 0 ? 7 : 3
      out += vertical
        ? `<rect x="7" y="${at - 1}" width="${size}" height="1"/>`
        : `<rect x="${at - 1}" y="${size === 7 ? 5 : 6}" width="1" height="${size}"/>`
    }
  }
  return out
}

define('report-document', `
  <style>
    :host { flex: 1; min-width: 0; display: flex; flex-direction: column; background: #fcfcfc; border-left: 1px solid #e6e6e6; overflow: hidden; }
    header { display: flex; justify-content: space-between; align-items: center; height: 35px; flex: none; background: #f7f7f7; border-bottom: 1px solid #8a9090; }
    .tab { display: flex; align-items: center; gap: 14px; padding-left: 10px; position: relative; font-size: 16px; font-weight: 700; color: #a4373a; height: 35px; }
    .tab svg { position: absolute; left: 0; top: 0; }
    .tab app-icon, .tab span { position: relative; }
    header button { border: 0; background: none; padding: 0; margin: 0 12px 0 0; }
    .body { flex: 1; min-height: 0; display: flex; }
    .design { flex: 1; min-width: 0; display: flex; flex-direction: column; padding: 3px 0 0 3px; overflow: hidden; }
    .top { display: flex; gap: 2px; height: 33px; flex: none; }
    .corner { box-sizing: border-box; width: 28px; height: 28px; border: 1px solid #c3c3c3; background: #fdfdfd; flex: none; }
    .ruler { box-sizing: border-box; flex: 1; min-width: 0; height: 32px; background: #fff; border: 1px solid #c3c3c3; border-left-width: 2px; border-right: 0; overflow: hidden; }
    .ruler svg { display: block; font-size: 14px; }
    .scroll { width: 26px; flex: none; display: flex; flex-direction: column; background: #f0f0f0; }
    .scroll button { height: 26px; border: 1px solid #c0c0c0; background: #fff; padding: 0; }
    .scroll div { margin-top: 167px; flex: 1; border: 1px solid #b0b0b8; border-bottom: 0; background: #fff; }
  </style>
  <header>
    <div class="tab">
      <svg width="120" height="36"><path d="M.5 36V4q0-3.500 4-3.500h76q12 0 16 12 3 9 7 17 3 6 10 6" fill="#fff" stroke="#8a9090"/></svg>
      <app-icon name="report"></app-icon><span></span>
    </div>
    <button aria-label="Close"><svg width="12" height="12"><path d="M1 1l10 10M11 1L1 11" stroke="#444" stroke-width="2"/></svg></button>
  </header>
  <div class="body">
    <div class="design">
      <div class="top"><div class="corner"></div><div class="ruler"><svg width="2000" height="30">${ticks(104, 0, 0, false)}</svg></div></div>
      <slot></slot>
    </div>
    <div class="scroll"><button aria-label="Scroll up"><svg width="12" height="7"><path d="M0 7h12L6 0z" fill="#777"/></svg></button><div></div></div>
  </div>
`, (host, root) => {
  root.querySelector('.tab span').textContent = host.getAttribute('name')
})

define('report-section', `
  <style>
    :host { display: flex; gap: 2px; flex: none; }
    :host([grow]) { flex: 1; min-height: 0; }
    .gutter { box-sizing: border-box; width: 28px; flex: none; background: #fff; border: 1px solid #c3c3c3; border-width: 0 1px; overflow: hidden; position: relative; }
    .gutter svg { position: absolute; left: 0; top: 0; font-size: 14px; }
    .canvas {
      flex: 1; min-width: 0; position: relative; overflow: hidden; border-left: 2px solid #c3c3c3;
      background:
        linear-gradient(90deg, transparent 143px, #333 0) 0 0 / 144px 100%,
        linear-gradient(90deg, #fff 5px, transparent 0) 0 0 / 6px 6px,
        linear-gradient(#fff 5px, #333 0) 0 var(--grid-y) / 6px 6px;
    }
  </style>
  <div class="gutter"></div>
  <div class="canvas"><slot></slot></div>
`, (host, root) => {
  const origin = Number(host.getAttribute('origin'))
  const first = Number(host.getAttribute('first') || 0)
  if (host.hasAttribute('height')) host.style.height = `${host.getAttribute('height')}px`
  host.style.setProperty('--grid-y', `${origin + 1}px`)
  root.querySelector('.gutter').innerHTML = `<svg width="26" height="1200">${ticks(60, origin, first, true)}</svg>`
})

define('section-bar', `
  <style>
    :host { display: flex; gap: 2px; height: 25px; flex: none; }
    .gutter { box-sizing: border-box; width: 28px; flex: none; background: #fdfdfd; border: 1px solid #c3c3c3; border-width: 1px 1px 1px 0; }
    .bar { flex: 1; display: flex; align-items: center; gap: 4px; padding-left: 5px; background: #fcfcfc; border-left: 2px solid #c3c3c3; font-size: 15px; line-height: 24px; color: #555; }
    svg { margin-bottom: 8px; }
  </style>
  <div class="gutter"></div>
  <div class="bar"><svg width="10" height="10"><path d="M0 5l5-5v2h5Q7 4 7 6v2L5 10z" fill="#444"/></svg><span><slot></slot></span></div>
`)

class PlacedElement extends HTMLElement {
  static get observedAttributes() {
    return ['x', 'y', 'width', 'height']
  }

  constructor() {
    super()

    const template = document.createElement('template')
    template.innerHTML = this.constructor.html
    this.attachShadow({ mode: 'open' }).appendChild(template.content.cloneNode(true))
  }

  attributeChangedCallback(name, oldValue, newValue) {
    if (oldValue === newValue) return
    const prop = { x: 'left', y: 'top' }[name] || name
    this.style[prop] = `${Number(newValue)}px`
  }
}

/* labels let Thai tone marks rise above the box, expressions are clipped to it */
customElements.define('report-item', class extends PlacedElement {
  static html = `
    <style>
      :host { position: absolute; box-sizing: border-box; display: flex; overflow: visible; white-space: nowrap; color: #111; font-size: 17px; line-height: 16px; padding: 0 2px 0 var(--pad, 1px); border: 0 solid #858585; }
      :host(.box) { border-width: 1px; padding-left: var(--pad, 0px); }
      :host(.black) { border-color: #000; }
      :host(.foot) { border-bottom: 1px solid #000; }
      :host(.fill) { background: #fff; }
      :host(.bold) { font-weight: 700; }
      :host(.italic) { font-style: italic; }
      :host(.center) { justify-content: center; }
      :host(.end) { justify-content: flex-end; }
      :host(.text) { font-size: 15px; line-height: 24px; overflow: hidden; }
      :host(.code) { font-family: Lato, "Noto Sans Thai", sans-serif; font-size: 14px; line-height: 20px; overflow: hidden; }
      :host(.expr) { font-family: Lato, "Noto Sans Thai", sans-serif; font-size: 15px; line-height: 20px; overflow: hidden; }
      :host(.name) { font-family: Lato, sans-serif; font-size: 18px; line-height: 24px; font-weight: 700; overflow: hidden; }
      :host(.red) { color: #e8262b; }
    </style>
    <span><slot></slot></span>
  `
})

customElements.define('report-line', class extends PlacedElement {
  static html = `
    <style>
      :host { position: absolute; display: block; background: #000; }
      :host([thin]) { background: #444; }
    </style>
  `
})

customElements.define('selected-item', class extends PlacedElement {
  static html = `
    <style>
      :host { position: absolute; display: block; box-sizing: border-box; border: 3px solid #f9a94a; color: #e8262b; background: #fff; font: 700 18px/24px Lato, sans-serif; }
      .text { overflow: hidden; display: flex; justify-content: center; height: 24px; }
      i { position: absolute; width: 8px; height: 8px; background: #f9a94a; }
      .nw { left: -9px; top: -4px; width: 14px; height: 6px; background: #8a9292; }
      .n { left: 24px; top: -3px; height: 4px; }
      .ne { right: -7px; top: -3px; height: 4px; }
      .w { left: -7px; top: 8px; }
      .sw { left: -7px; bottom: -6px; }
      .s { left: 24px; bottom: -6px; }
      .se { right: -7px; bottom: -6px; }
    </style>
    <div class="text"><slot></slot></div>
    <i class="nw"></i><i class="n"></i><i class="ne"></i><i class="w"></i><i class="sw"></i><i class="s"></i><i class="se"></i>
  `
})

/* property sheet */

define('property-sheet', `
  <style>
    :host { display: block; box-sizing: border-box; width: 361px; flex: none; background: #fff; border-left: 1px solid #cfcfcf; overflow: hidden; color: #222; padding-left: 7px; }
    h2 { margin: 9px 0 0 9px; font-size: 30px; line-height: 44px; font-weight: 300; color: #a4373a; white-space: nowrap; }
    p { margin: 0 0 0 3px; font-size: 15px; line-height: 22px; height: 30px; color: #555; white-space: pre; }
    .pick { position: relative; width: 315px; height: 34px; margin-left: 2px; }
    select { appearance: none; box-sizing: border-box; width: 100%; height: 34px; border: 1px solid #ababab; border-radius: 0; background: #fff; padding: 0 0 6px 3px; font: inherit; font-size: 15px; color: #222; }
    .drop { position: absolute; right: 2px; top: 2px; box-sizing: border-box; width: 26px; height: 30px; background: #e1e1e1; border: 1px solid #ababab; display: flex; align-items: center; justify-content: center; pointer-events: none; }
    .tabs { display: flex; align-items: flex-end; height: 34px; padding-left: 2px; position: relative; margin-top: -1px; }
    .tabs button { box-sizing: border-box; height: 27px; border: 1px solid #d4d4d4; border-right: 0; background: #f0f0f0; font: inherit; font-size: 15px; padding: 0; color: #222; width: 62px; }
    .tabs button:last-child { border-right: 1px solid #d4d4d4; }
    .tabs button.on { height: 29px; width: 66px; background: #fff; border-bottom-color: #fff; padding-bottom: 4px; }
    .page { border: 1px solid #d4d4d4; border-width: 1px 0 0 1px; height: 500px; padding: 6px 0 0 3px; margin-top: -1px; }
    table { border-collapse: collapse; width: 400px; font-size: 15px; line-height: 21px; table-layout: fixed; }
    th, td { border: 2px solid #c0c0c0; height: 21px; padding: 0 0 0 1px; font-weight: 400; text-align: left; white-space: nowrap; overflow: hidden; }
    th { width: 183px; box-sizing: border-box; }
    td { padding-left: 2px; }
    .entry { display: flex; }
    .entry input { border: 0; outline: 0; padding: 0; width: 137px; height: 21px; font: inherit; color: #222; }
    .entry button { border: 0; border-left: 1px solid #b5b5b5; background: #e1e1e1; width: 30px; height: 21px; padding: 0; text-align: left; }
    .entry svg { margin-left: 6px; vertical-align: middle; }
  </style>
  <h2>Property Sheet</h2>
  <p>Selection type:  Text Box</p>
  <div class="pick">
    <select aria-label="Selected control"><option>Runsum</option></select>
    <span class="drop"><svg width="12" height="8"><path d="M1 1l5 5 5-5" fill="none" stroke="#555" stroke-width="1.500"/></svg></span>
  </div>
  <div class="tabs" role="tablist">
    <button role="tab">Format</button><button role="tab" class="on" aria-selected="true">Data</button><button role="tab">Event</button><button role="tab">Other</button><button role="tab">All</button>
  </div>
  <div class="page">
    <table>
      <tr><th><label for="source">Control Source</label></th><td><div class="entry"><input id="source" value="=[Txincm]+[Txincm"><button aria-label="Choose source"><svg width="12" height="8"><path d="M1 1l5 5 5-5" fill="none" stroke="#555" stroke-width="1.500"/></svg></button></div></td></tr>
      <tr><th>Text Format</th><td>Plain Text</td></tr>
      <tr><th>Running Sum</th><td>Over All</td></tr>
      <tr><th>Input Mask</th><td></td></tr>
      <tr><th>Enabled</th><td>Yes</td></tr>
    </table>
  </div>
`)

define('pen-mark', `
  <style>
    :host { position: absolute; left: 0; top: 0; pointer-events: none; }
    svg { display: block; }
  </style>
  <svg width="1520" height="420">
    <path d="M155 264C775 437 797 424 1508 212" fill="none" stroke="#ed1c24" stroke-width="5"/>
    <path d="M1489 202l20 10-14 20" fill="none" stroke="#ed1c24" stroke-width="5" stroke-linecap="round"/>
  </svg>
`)
</script>
</body>
</html>
